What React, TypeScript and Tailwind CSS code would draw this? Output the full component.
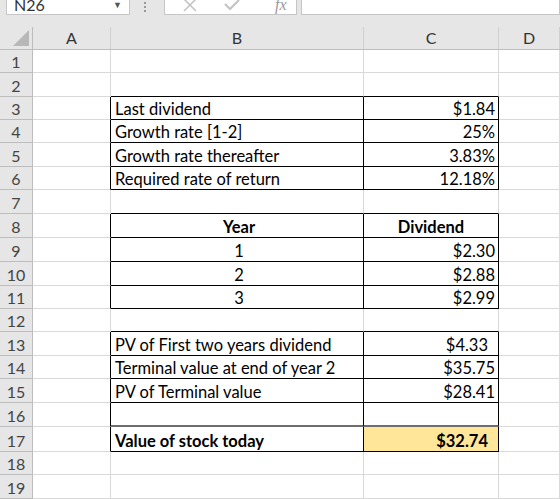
import React from 'react'

const colWidths = [33, 78, 253, 135, 61]
const rowHeights = [23, 24, 23, 23, 24, 23, 24, 24, 24, 24, 23, 23, 24, 23, 24, 24, 25, 23, 24]
const letters = ['A', 'B', 'C', 'D']

type Cell = { text: string; align?: 'left' | 'right' | 'center'; bold?: boolean; pr?: number }

// row -> [B, C]
const data: Record<number, [Cell, Cell]> = {
  3: [{ text: 'Last dividend' }, { text: '$1.84', align: 'right' }],
  4: [{ text: 'Growth rate [1-2]' }, { text: '25%', align: 'right' }],
  5: [{ text: 'Growth rate thereafter' }, { text: '3.83%', align: 'right' }],
  6: [{ text: 'Required rate of return' }, { text: '12.18%', align: 'right' }],
  8: [{ text: 'Year', align: 'center', bold: true }, { text: 'Dividend', align: 'center', bold: true }],
  9: [{ text: '1', align: 'center' }, { text: '$2.30', align: 'right' }],
  10: [{ text: '2', align: 'center' }, { text: '$2.88', align: 'right' }],
  11: [{ text: '3', align: 'center' }, { text: '$2.99', align: 'right' }],
  13: [{ text: 'PV of First two years dividend' }, { text: '$4.33', align: 'right', pr: 10 }],
  14: [{ text: 'Terminal value at end of year 2' }, { text: '$35.75', align: 'right' }],
  15: [{ text: 'PV of Terminal value' }, { text: '$28.41', align: 'right' }],
  16: [{ text: '' }, { text: '' }],
  17: [{ text: 'Value of stock today', bold: true }, { text: '$32.74', align: 'right', bold: true, pr: 10 }],
}

const boxed = (r: number, c: number) => (c === 1 || c === 2) && ((r >= 3 && r <= 6) || (r >= 8 && r <= 11) || (r >= 13 && r <= 17))

export default function App() {
  return (
    <div className="w-[560px] h-[499px] overflow-hidden bg-white" style={{ fontFamily: 'Lato, "Open Sans", sans-serif' }}>
      {/* formula bar strip */}
      <div className="h-[27px] bg-[#e6e6e6] flex items-start overflow-hidden">
        <div className="ml-[6px] mt-[-6px] w-[124px] h-[21px] bg-white border border-[#c6c6c6] flex items-center justify-between px-[7px] text-[16px] text-[#333]">
          <span>N26</span>
          <span className="text-[9px] text-[#555]">▼</span>
        </div>
        <div className="ml-[14px] mt-[2px] flex flex-col gap-[2px]">
          <span className="w-[2px] h-[2px] bg-[#999]" />
          <span className="w-[2px] h-[2px] bg-[#999]" />
          <span className="w-[2px] h-[2px] bg-[#999]" />
        </div>
        <div className="ml-[18px] mt-[-6px] w-[133px] h-[21px] bg-white border border-[#c6c6c6] flex items-center">
          <svg className="ml-[17px]" width="16" height="14" viewBox="0 0 16 14">
            <path d="M2 1L14 13M14 1L2 13" stroke="#c4c4c4" strokeWidth="1.6" fill="none" />
          </svg>
          <svg className="ml-[25px]" width="18" height="14" viewBox="0 0 18 14">
            <path d="M2 6L7 11L16 2" stroke="#c4c4c4" strokeWidth="2.2" fill="none" />
          </svg>
          <span className="ml-[34px] italic text-[16px] text-[#999]" style={{ fontFamily: '"Liberation Serif", serif' }}>fx</span>
        </div>
        <div className="ml-[4px] mt-[-6px] flex-1 h-[21px] bg-white border border-[#c6c6c6]" />
      </div>

      {/* column headers */}
      <div className="flex h-[23px] bg-[#e6e6e6] border-b border-[#bdbdbd]">
        <div className="h-full border-r border-[#bdbdbd] flex items-end justify-end pr-[3px] pb-[3px]" style={{ width: colWidths[0] }}>
          <svg width="16" height="16" viewBox="0 0 16 16">
            <path d="M16 0L16 16L0 16Z" fill="#b8b8b8" />
          </svg>
        </div>
        {letters.map((l, i) => (
          <div
            key={l}
            className="h-full border-r border-[#d0d0d0] flex items-center justify-center text-[16px] text-[#333]"
            style={{ width: colWidths[i + 1] }}
          >
            {l}
          </div>
        ))}
      </div>

      {/* rows */}
      {rowHeights.map((h, idx) => {
        const r = idx + 1
        const row = data[r]
        return (
          <div key={r} className="flex" style={{ height: h }}>
            <div
              className="h-full bg-[#e6e6e6] border-r border-b border-[#bdbdbd] flex items-end justify-center text-[16px] leading-[21px] text-[#444]"
              style={{ width: colWidths[0] }}
            >
              {r}
            </div>
            {[0, 1, 2, 3].map((c) => {
              const isBox = boxed(r, c)
              const rightBlack = isBox || boxed(r, c + 1)
              const bottomBlack = isBox || boxed(r + 1, c)
              const thickGray = r === 16 && isBox
              const cell = row && (c === 1 || c === 2) ? row[c - 1] : null
              const yellow = r === 17 && c === 2
              return (
                <div
                  key={c}
                  className={[
                    'h-full border-r flex items-end text-[16.5px] leading-[20px] text-black whitespace-nowrap overflow-hidden',
                    rightBlack ? 'border-r-black' : 'border-r-[#d9d9d9]',
                    thickGray ? 'border-b-2 border-b-[#6e6e6e]' : bottomBlack ? 'border-b border-b-black' : 'border-b border-b-[#d9d9d9]',
                    yellow ? 'bg-[#ffe699]' : '',
                    cell?.align === 'right' ? 'justify-end' : cell?.align === 'center' ? 'justify-center' : 'justify-start',
                    cell?.bold ? 'font-bold' : '',
                    c === 1 ? 'pl-[4px]' : '',
                  ].join(' ')}
                  style={{ width: colWidths[c + 1], paddingRight: cell?.align === 'right' ? cell.pr ?? 3 : undefined }}
                >
                  {cell?.text}
                </div>
              )
            })}
          </div>
        )
      })}
    </div>
  )
}
